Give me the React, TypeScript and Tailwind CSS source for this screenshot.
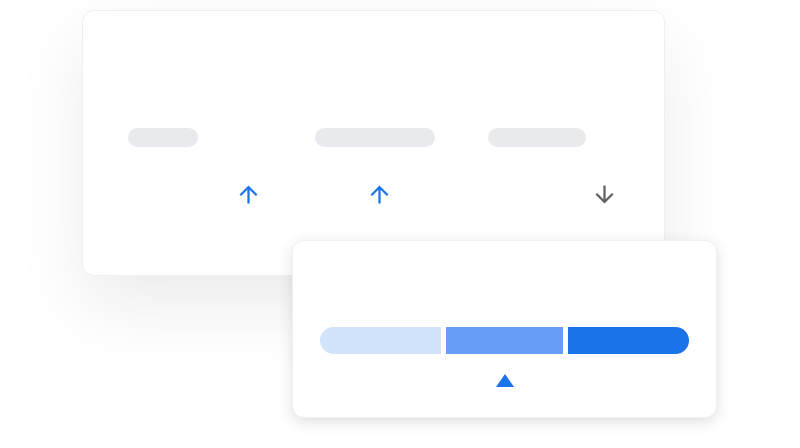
import React from 'react';

function Arrow({ down = false, color }: { down?: boolean; color: string }) {
  return (
    <svg
      width="27"
      height="27"
      viewBox="0 0 24 24"
      className={down ? 'rotate-180' : ''}
      fill={color}
    >
      <path d="M4 12l1.41 1.41L11 7.83V20h2V7.83l5.58 5.59L20 12l-8-8-8 8z" />
    </svg>
  );
}

export default function App() {
  return (
    <div className="relative w-[800px] h-[448px] bg-white overflow-hidden">
      {/* Back card: metrics with trend arrows */}
      <div className="ml-[82px] mt-[10px] w-[583px] h-[266px] bg-white rounded-[12px] border border-[#eeeff1] shadow-[0_30px_70px_rgba(0,0,0,0.08)] pt-[117px]">
        <div className="flex items-center pl-[45px]">
          <div className="w-[70px] h-[19px] rounded-full bg-[#e8eaed]" />
          <div className="ml-[117px] w-[120px] h-[19px] rounded-full bg-[#e8eaed]" />
          <div className="ml-[53px] w-[98px] h-[19px] rounded-full bg-[#e8eaed]" />
        </div>
        <div className="flex items-center mt-[34px] pl-[152px]">
          <Arrow color="#1a73e8" />
          <div className="ml-[104px]">
            <Arrow color="#1a73e8" />
          </div>
          <div className="ml-[198px]">
            <Arrow down color="#5f6368" />
          </div>
        </div>
      </div>

      {/* Front card: segmented scale */}
      <div className="absolute left-[292px] top-[240px] w-[425px] h-[178px] bg-white rounded-[12px] border border-[#eff0f2] shadow-[0_4px_14px_rgba(60,64,67,0.16)] flex flex-col items-center pt-[86px]">
        <div className="flex gap-[5px] w-[369px] h-[27px]">
          <div className="w-[121px] bg-[#d2e3fc] rounded-l-full" />
          <div className="w-[117px] bg-[#669df6]" />
          <div className="w-[121px] bg-[#1a73e8] rounded-r-full" />
        </div>
        <svg width="18" height="13" viewBox="0 0 18 13" className="mt-[20px]">
          <polygon points="9,0 18,13 0,13" fill="#1a73e8" />
        </svg>
      </div>
    </div>
  );
}
